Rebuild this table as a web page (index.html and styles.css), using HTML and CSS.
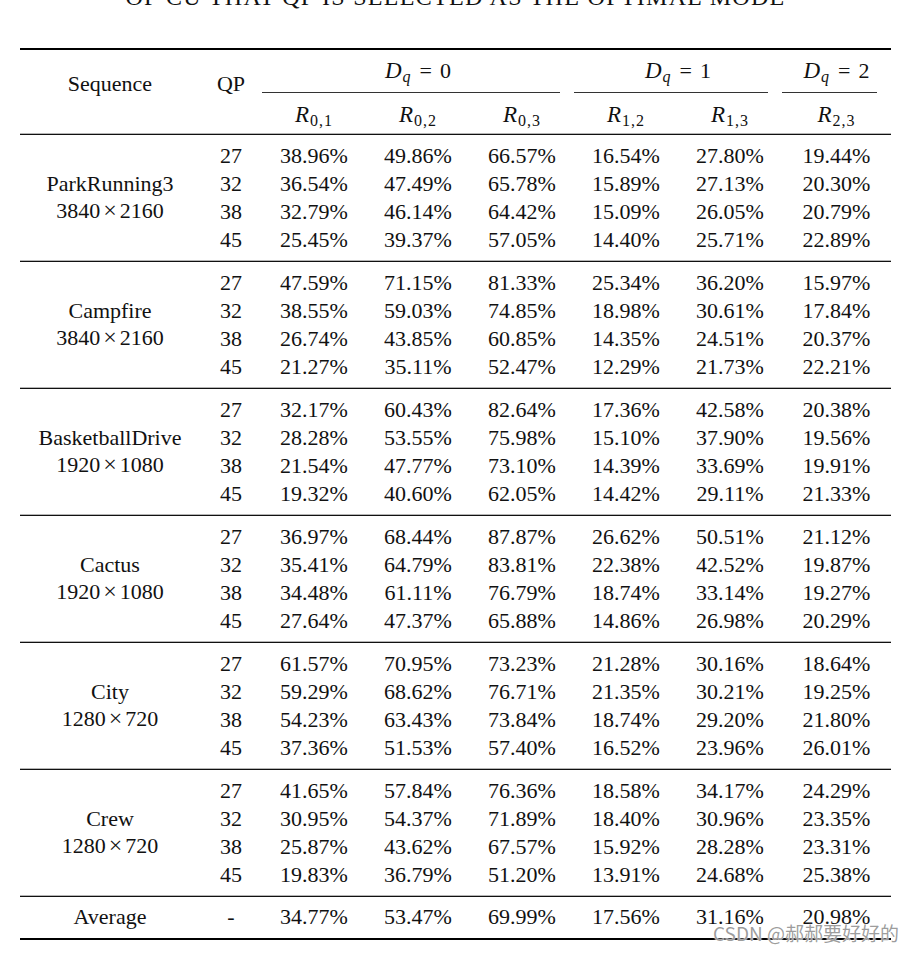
FILE: index.html
```html
<!DOCTYPE html>
<html lang="en">
<head>
<meta charset="utf-8">
<title>Table</title>
<link rel="stylesheet" href="styles.css">
</head>
<body>
<div class="page">
  <div class="caption">OF CU THAT QP IS SELECTED AS THE OPTIMAL MODE</div>
  <div class="table">
    <div class="section head">
      <div class="seqhead">Sequence</div>
      <div class="qphead">QP</div>
      <div class="dq dq0"><i>D</i><sub><i>q</i></sub><span class="eq">=</span>0</div>
      <div class="dq dq1"><i>D</i><sub><i>q</i></sub><span class="eq">=</span>1</div>
      <div class="dq dq2"><i>D</i><sub><i>q</i></sub><span class="eq">=</span>2</div>
      <div class="cmid c0"></div>
      <div class="cmid c1"></div>
      <div class="cmid c2"></div>
      <div class="r r1"><i>R</i><sub>0,1</sub></div>
      <div class="r r2"><i>R</i><sub>0,2</sub></div>
      <div class="r r3"><i>R</i><sub>0,3</sub></div>
      <div class="r r4"><i>R</i><sub>1,2</sub></div>
      <div class="r r5"><i>R</i><sub>1,3</sub></div>
      <div class="r r6"><i>R</i><sub>2,3</sub></div>
    </div>

    <div class="section group">
      <div class="seq"><span>ParkRunning3</span><span>3840<span class="x">×</span>2160</span></div>
      <div>27</div><div>38.96%</div><div>49.86%</div><div>66.57%</div><div>16.54%</div><div>27.80%</div><div>19.44%</div>
      <div>32</div><div>36.54%</div><div>47.49%</div><div>65.78%</div><div>15.89%</div><div>27.13%</div><div>20.30%</div>
      <div>38</div><div>32.79%</div><div>46.14%</div><div>64.42%</div><div>15.09%</div><div>26.05%</div><div>20.79%</div>
      <div>45</div><div>25.45%</div><div>39.37%</div><div>57.05%</div><div>14.40%</div><div>25.71%</div><div>22.89%</div>
    </div>

    <div class="section group">
      <div class="seq"><span>Campfire</span><span>3840<span class="x">×</span>2160</span></div>
      <div>27</div><div>47.59%</div><div>71.15%</div><div>81.33%</div><div>25.34%</div><div>36.20%</div><div>15.97%</div>
      <div>32</div><div>38.55%</div><div>59.03%</div><div>74.85%</div><div>18.98%</div><div>30.61%</div><div>17.84%</div>
      <div>38</div><div>26.74%</div><div>43.85%</div><div>60.85%</div><div>14.35%</div><div>24.51%</div><div>20.37%</div>
      <div>45</div><div>21.27%</div><div>35.11%</div><div>52.47%</div><div>12.29%</div><div>21.73%</div><div>22.21%</div>
    </div>

    <div class="section group">
      <div class="seq"><span>BasketballDrive</span><span>1920<span class="x">×</span>1080</span></div>
      <div>27</div><div>32.17%</div><div>60.43%</div><div>82.64%</div><div>17.36%</div><div>42.58%</div><div>20.38%</div>
      <div>32</div><div>28.28%</div><div>53.55%</div><div>75.98%</div><div>15.10%</div><div>37.90%</div><div>19.56%</div>
      <div>38</div><div>21.54%</div><div>47.77%</div><div>73.10%</div><div>14.39%</div><div>33.69%</div><div>19.91%</div>
      <div>45</div><div>19.32%</div><div>40.60%</div><div>62.05%</div><div>14.42%</div><div>29.11%</div><div>21.33%</div>
    </div>

    <div class="section group">
      <div class="seq"><span>Cactus</span><span>1920<span class="x">×</span>1080</span></div>
      <div>27</div><div>36.97%</div><div>68.44%</div><div>87.87%</div><div>26.62%</div><div>50.51%</div><div>21.12%</div>
      <div>32</div><div>35.41%</div><div>64.79%</div><div>83.81%</div><div>22.38%</div><div>42.52%</div><div>19.87%</div>
      <div>38</div><div>34.48%</div><div>61.11%</div><div>76.79%</div><div>18.74%</div><div>33.14%</div><div>19.27%</div>
      <div>45</div><div>27.64%</div><div>47.37%</div><div>65.88%</div><div>14.86%</div><div>26.98%</div><div>20.29%</div>
    </div>

    <div class="section group">
      <div class="seq"><span>City</span><span>1280<span class="x">×</span>720</span></div>
      <div>27</div><div>61.57%</div><div>70.95%</div><div>73.23%</div><div>21.28%</div><div>30.16%</div><div>18.64%</div>
      <div>32</div><div>59.29%</div><div>68.62%</div><div>76.71%</div><div>21.35%</div><div>30.21%</div><div>19.25%</div>
      <div>38</div><div>54.23%</div><div>63.43%</div><div>73.84%</div><div>18.74%</div><div>29.20%</div><div>21.80%</div>
      <div>45</div><div>37.36%</div><div>51.53%</div><div>57.40%</div><div>16.52%</div><div>23.96%</div><div>26.01%</div>
    </div>

    <div class="section group">
      <div class="seq"><span>Crew</span><span>1280<span class="x">×</span>720</span></div>
      <div>27</div><div>41.65%</div><div>57.84%</div><div>76.36%</div><div>18.58%</div><div>34.17%</div><div>24.29%</div>
      <div>32</div><div>30.95%</div><div>54.37%</div><div>71.89%</div><div>18.40%</div><div>30.96%</div><div>23.35%</div>
      <div>38</div><div>25.87%</div><div>43.62%</div><div>67.57%</div><div>15.92%</div><div>28.28%</div><div>23.31%</div>
      <div>45</div><div>19.83%</div><div>36.79%</div><div>51.20%</div><div>13.91%</div><div>24.68%</div><div>25.38%</div>
    </div>

    <div class="section avg">
      <div>Average</div><div>-</div><div>34.77%</div><div>53.47%</div><div>69.99%</div><div>17.56%</div><div>31.16%</div><div>20.98%</div>
    </div>
  </div>
  <div class="watermark">CSDN @郝郝要好好的</div>
</div>
</body>
</html>
```

FILE: styles.css
```css
html, body {
  margin: 0;
  padding: 0;
  background: #fff;
}

.page {
  position: relative;
  width: 918px;
  height: 953px;
  overflow: hidden;
  font-family: "Liberation Serif", "Times New Roman", serif;
  color: #111;
}

.caption {
  margin-top: -17px;
  height: 28px;
  line-height: 28px;
  font-size: 24px;
  letter-spacing: 1.3px;
  text-align: center;
  width: 871px;
  margin-left: 20px;
}

.table {
  margin-top: 37px;
  margin-left: 20px;
  width: 871px;
  border-top: 2px solid #000;
  border-bottom: 2px solid #000;
  font-size: 22px;
}

.section {
  display: grid;
  grid-template-columns: 180px 62px 104px 104px 104px 104px 104px 109px;
  grid-auto-rows: 28px;
  line-height: 28px;
  text-align: center;
}

.section i {
  font-size: 23px;
}

.section sub {
  font-size: 16px;
  line-height: 0;
  vertical-align: -4px;
  letter-spacing: 1px;
  margin-left: 1px;
}

.section sub i {
  font-size: 16px;
}

.eq {
  margin: 0 8px;
}

.head {
  grid-template-rows: 28px 16px 28px;
  padding: 7px 0 5px;
}

.seqhead {
  grid-column: 1;
  grid-row: 1 / 4;
  align-self: center;
  padding-bottom: 18px;
}

.qphead {
  grid-column: 2;
  grid-row: 1 / 4;
  align-self: center;
  padding-bottom: 18px;
}

.dq0 { grid-column: 3 / 6; grid-row: 1; }
.dq1 { grid-column: 6 / 8; grid-row: 1; }
.dq2 { grid-column: 8 / 9; grid-row: 1; }

.cmid {
  grid-row: 2;
  align-self: start;
  margin-top: 7px;
  margin-right: 14px;
  height: 1px;
  background: #333;
}
.c0 { grid-column: 3 / 6; }
.c1 { grid-column: 6 / 8; }
.c2 { grid-column: 8 / 9; }

.r { grid-row: 3; }
.r1 { grid-column: 3; }
.r2 { grid-column: 4; }
.r3 { grid-column: 5; }
.r4 { grid-column: 6; }
.r5 { grid-column: 7; }
.r6 { grid-column: 8; }

.group,
.avg {
  border-top: 1px solid #111;
  box-shadow: 0 -1px 0 #b5b5b5;
}

.group {
  padding: 7px 0;
}

.avg {
  padding: 6px 0 7px;
}

.seq {
  grid-column: 1;
  grid-row: 1 / 5;
  display: flex;
  flex-direction: column;
  justify-content: center;
  line-height: 26px;
  padding-bottom: 2px;
}

.x {
  margin: 0 3px;
  font-size: 24px;
}

.watermark {
  position: absolute;
  left: 713px;
  top: 921px;
  font-family: "Noto Sans CJK SC", "Noto Sans", sans-serif;
  font-size: 19px;
  line-height: 24px;
  color: rgba(140, 140, 140, 0.85);
  text-shadow: 0 0 2px #fff, 0 0 1px #fff;
  white-space: nowrap;
}
```
